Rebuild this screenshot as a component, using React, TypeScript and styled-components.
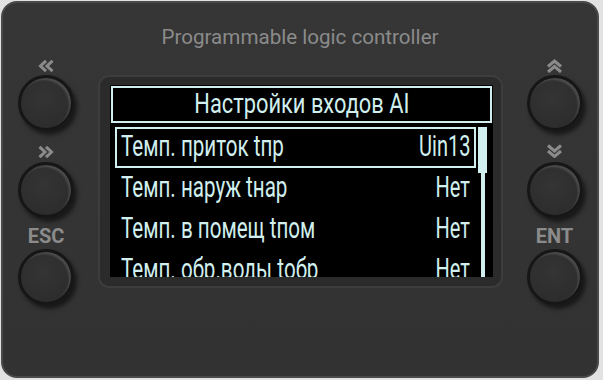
import React from "react";
import styled, { createGlobalStyle } from "styled-components";

const GlobalStyle = createGlobalStyle`
  html, body { margin: 0; padding: 0; background: #e2e2e2; }
  body { font-family: Roboto, "Noto Sans", sans-serif; }
`;

const LCD = "#d0efee";
const LABEL = "#8b8b8b";

const Page = styled.div`
  box-sizing: border-box;
  width: 603px;
  height: 380px;
  padding: 1px 0 0 1px;
  overflow: hidden;
`;

const Panel = styled.div`
  box-sizing: border-box;
  width: 598px;
  height: 377px;
  border-radius: 16px;
  border: 2px solid #4a4a4a;
  background: linear-gradient(180deg, #363636 0%, #323232 100%);
  display: flex;
  flex-direction: column;
`;

const Title = styled.div`
  margin-top: 22px;
  height: 24px;
  line-height: 24px;
  text-align: center;
  font-size: 20.6px;
  color: ${LABEL};
`;

const Body = styled.div`
  margin-top: 4px;
  display: grid;
  grid-template-columns: 86px 405px 1fr;
  column-gap: 9px;
  align-items: start;
`;

const KeyColumn = styled.div`
  display: flex;
  flex-direction: column;
  align-items: center;
  gap: 9px;
`;

const KeyGroup = styled.div`
  display: flex;
  flex-direction: column;
  align-items: center;
`;

const KeyLabel = styled.div<{ $pb?: number }>`
  height: 22px;
  box-sizing: border-box;
  padding-bottom: ${(p) => p.$pb ?? 4}px;
  display: flex;
  align-items: flex-end;
  justify-content: center;
  font-size: 20px;
  line-height: 18px;
  font-weight: 700;
  color: ${LABEL};
`;

const KeyButton = styled.div`
  box-sizing: border-box;
  width: 56px;
  height: 56px;
  border-radius: 50%;
  border: 3px solid #161616;
  background: radial-gradient(circle at 45% 40%, #343434 0%, #2e2e2e 60%, #2a2a2a 100%);
  box-shadow: inset -2px 2px 2px rgba(255, 255, 255, 0.14), 3px 4px 4px rgba(0, 0, 0, 0.55);
`;

const ChevronSvg = styled.svg`
  display: block;
  fill: none;
  stroke: ${LABEL};
  stroke-width: 3;
  stroke-linejoin: miter;
`;

type Dir = "left" | "right" | "up" | "down";
const chevronPaths: Record<Dir, string> = {
  left: "M8 0.8 L2.5 6 L8 11.2 M14.5 0.8 L9 6 L14.5 11.2",
  right: "M1.5 0.8 L7 6 L1.5 11.2 M8 0.8 L13.5 6 L8 11.2",
  up: "M2 7.5 L8.5 2 L15 7.5 M2 13 L8.5 7.5 L15 13",
  down: "M2 1.5 L8.5 7 L15 1.5 M2 7 L8.5 12.5 L15 7",
};

const Chevrons = ({ dir }: { dir: Dir }) => {
  const horizontal = dir === "left" || dir === "right";
  return (
    <ChevronSvg
      width={horizontal ? 16 : 17}
      height={horizontal ? 12 : 14}
      viewBox={horizontal ? "0 0 16 12" : "0 0 17 14"}
    >
      <path d={chevronPaths[dir]} />
    </ChevronSvg>
  );
};

const Bezel = styled.div`
  box-sizing: border-box;
  width: 405px;
  height: 213px;
  margin-top: 22px;
  border-radius: 11px;
  background: #2b2b2b;
  border: 2px solid #3d3d3d;
  padding: 8px 8px 9px 10px;
`;

const Screen = styled.div`
  box-sizing: border-box;
  width: 100%;
  height: 100%;
  background: #000;
  overflow: hidden;
  padding: 1px 1px 0 1px;
  display: flex;
  flex-direction: column;
`;

const Header = styled.div`
  box-sizing: border-box;
  height: 37px;
  flex: none;
  border: 2px solid ${LCD};
  display: flex;
  align-items: center;
  justify-content: center;
  padding-bottom: 2px;
`;

const LcdText = styled.span<{ $size: number; $scale: number; $origin: string }>`
  display: inline-block;
  white-space: nowrap;
  color: ${LCD};
  font-family: Roboto, "DejaVu Sans", sans-serif;
  font-size: ${(p) => p.$size}px;
  line-height: 1;
  transform: scaleX(${(p) => p.$scale});
  transform-origin: ${(p) => p.$origin};
`;

const ListArea = styled.div`
  display: flex;
  margin: 4px 5px 0 4px;
  gap: 2px;
`;

const Rows = styled.div`
  width: 361px;
  display: flex;
  flex-direction: column;
`;

const Row = styled.div<{ $selected?: boolean }>`
  box-sizing: border-box;
  height: 41px;
  flex: none;
  border: 2px solid ${(p) => (p.$selected ? LCD : "transparent")};
  display: flex;
  align-items: center;
  justify-content: space-between;
  padding: 0 4px 3px 4px;
`;

const Scrollbar = styled.div`
  width: 9px;
  display: flex;
  flex-direction: column;
  align-items: center;
`;

const Thumb = styled.div`
  width: 9px;
  height: 46px;
  background: ${LCD};
  flex: none;
`;

const Rail = styled.div`
  width: 4px;
  flex: 1;
  background: ${LCD};
`;

const rows = [
  { name: "Темп. приток tпр", value: "Uin13", selected: true },
  { name: "Темп. наруж tнар", value: "Нет" },
  { name: "Темп. в помещ tпом", value: "Нет" },
  { name: "Темп. обр.воды tобр", value: "Нет" },
];

export default function App() {
  return (
    <Page>
      <GlobalStyle />
      <Panel>
        <Title>Programmable logic controller</Title>
        <Body>
          <KeyColumn>
            <KeyGroup>
              <KeyLabel $pb={3}>
                <Chevrons dir="left" />
              </KeyLabel>
              <KeyButton />
            </KeyGroup>
            <KeyGroup>
              <KeyLabel $pb={4}>
                <Chevrons dir="right" />
              </KeyLabel>
              <KeyButton />
            </KeyGroup>
            <KeyGroup>
              <KeyLabel>ESC</KeyLabel>
              <KeyButton />
            </KeyGroup>
          </KeyColumn>

          <Bezel>
            <Screen>
              <Header>
                <LcdText $size={28} $scale={0.78} $origin="center">
                  Настройки входов AI
                </LcdText>
              </Header>
              <ListArea>
                <Rows>
                  {rows.map((r) => (
                    <Row key={r.name} $selected={r.selected}>
                      <LcdText $size={29} $scale={0.71} $origin="left center">
                        {r.name}
                      </LcdText>
                      <LcdText $size={29} $scale={0.69} $origin="right center">
                        {r.value}
                      </LcdText>
                    </Row>
                  ))}
                </Rows>
                <Scrollbar>
                  <Thumb />
                  <Rail />
                </Scrollbar>
              </ListArea>
            </Screen>
          </Bezel>

          <KeyColumn>
            <KeyGroup>
              <KeyLabel $pb={2}>
                <Chevrons dir="up" />
              </KeyLabel>
              <KeyButton />
            </KeyGroup>
            <KeyGroup>
              <KeyLabel $pb={4}>
                <Chevrons dir="down" />
              </KeyLabel>
              <KeyButton />
            </KeyGroup>
            <KeyGroup>
              <KeyLabel>ENT</KeyLabel>
              <KeyButton />
            </KeyGroup>
          </KeyColumn>
        </Body>
      </Panel>
    </Page>
  );
}
